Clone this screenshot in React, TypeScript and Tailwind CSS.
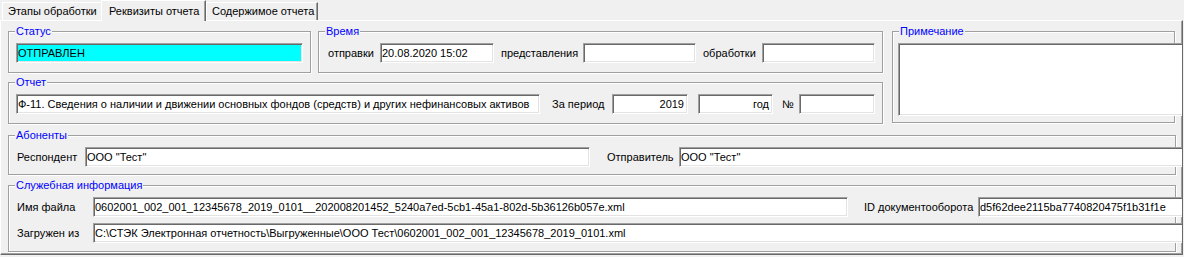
import React from 'react';

const sunken =
  'border border-t-[#a0a0a0] border-l-[#a0a0a0] border-r-white border-b-white shadow-[inset_1px_1px_0_#696969,inset_-1px_-1px_0_#e3e3e3]';

function Field({ value = '', className = '', right = false }: { value?: string; className?: string; right?: boolean }) {
  return (
    <div
      className={`${sunken} flex h-[20px] shrink-0 items-center overflow-hidden whitespace-nowrap pl-[1px] pr-[3px] ${
        right ? 'justify-end' : ''
      } ${className}`}
    >
      {value}
    </div>
  );
}

function Label({ text, className = '' }: { text: string; className?: string }) {
  return <div className={`shrink-0 whitespace-nowrap ${className}`}>{text}</div>;
}

function Group({ title, className = '', children }: { title: string; className?: string; children?: React.ReactNode }) {
  return (
    <div
      className={`relative shrink-0 border border-[#a0a0a0] shadow-[inset_1px_1px_0_#fff,1px_1px_0_#fff] ${className}`}
    >
      <span className="absolute left-[6px] top-[-8px] bg-[#f0f0f0] px-[1px] leading-[14px] text-[#0000ff]">{title}</span>
      {children}
    </div>
  );
}

function Tab({ text, active = false, className = '' }: { text: string; active?: boolean; className?: string }) {
  return (
    <div
      className={`flex shrink-0 items-center border-l border-t border-white bg-[#f0f0f0] ${
        active
          ? 'relative z-10 mb-[-1px] h-[21px] border-r border-r-[#696969] pl-[7px] shadow-[inset_-1px_0_0_#a0a0a0]'
          : 'h-[18px] pl-[5px]'
      } ${className}`}
    >
      {text}
    </div>
  );
}

export default function App() {
  return (
    <div className="h-[257px] w-[1184px] overflow-hidden bg-[#f0f0f0] font-['Liberation_Sans',Arial,sans-serif] text-[11px] text-black">
      <div className="relative z-10 flex h-[20px] items-end pl-[2px]">
        <Tab text="Этапы обработки" className="w-[99px]" />
        <Tab text="Реквизиты отчета" active className="w-[105px]" />
        <Tab
          text="Содержимое отчета"
          className="w-[112px] border-r border-r-[#696969] shadow-[inset_-1px_0_0_#a0a0a0]"
        />
      </div>

      <div className="h-[235px] w-[1183px] overflow-hidden border border-l-white border-t-white border-r-[#696969] border-b-[#696969] pl-[7px] pt-[10px] shadow-[inset_-1px_-1px_0_#a0a0a0]">
        <div className="flex gap-[9px]">
          <div className="flex w-[875px] flex-col gap-[9px]">
            <div className="flex gap-[7px]">
              <Group title="Статус" className="h-[42px] w-[303px] pl-[7px] pt-[11px]">
                <Field value="ОТПРАВЛЕН" className="w-[287px] !bg-[#00ffff]" />
              </Group>
              <Group title="Время" className="flex h-[42px] w-[565px] items-start pl-[9px] pt-[11px]">
                <div className="flex items-center">
                  <Label text="отправки" className="w-[52px]" />
                  <Field value="20.08.2020 15:02" className="w-[114px] bg-white" />
                  <Label text="представления" className="w-[89px] pl-[7px]" />
                  <Field className="w-[113px] bg-white" />
                  <Label text="обработки" className="w-[66px] pl-[7px]" />
                  <Field className="w-[113px] bg-white" />
                </div>
              </Group>
            </div>
            <Group title="Отчет" className="h-[42px] w-[875px] pl-[7px] pt-[11px]">
              <div className="flex items-center">
                <Field
                  value="Ф-11. Сведения о наличии и движении основных фондов (средств) и других нефинансовых активов"
                  className="w-[524px] bg-white"
                />
                <Label text="За период" className="w-[72px] pl-[12px]" />
                <Field value="2019" right className="w-[76px] bg-white" />
                <Field value="год" right className="ml-[10px] w-[75px] bg-white" />
                <Label text="№" className="w-[26px] pl-[9px]" />
                <Field className="w-[76px] bg-white" />
              </div>
            </Group>
          </div>
          <Group title="Примечание" className="h-[92px] w-[283px] pl-[5px] pt-[11px]">
            <div className={`${sunken} h-[73px] w-[290px] bg-white`} />
          </Group>
        </div>

        <Group title="Абоненты" className="mt-[11px] h-[40px] w-[1168px] pl-[8px] pt-[11px]">
          <div className="flex items-center">
            <Label text="Респондент" className="w-[68px]" />
            <Field value={'ООО "Тест"'} className="w-[505px] bg-white" />
            <Label text="Отправитель" className="w-[89px] pl-[17px]" />
            <Field value={'ООО "Тест"'} className="w-[520px] bg-white" />
          </div>
        </Group>

        <Group title="Служебная информация" className="mt-[10px] h-[67px] w-[1168px] pl-[8px] pt-[11px]">
          <div className="flex items-center">
            <Label text="Имя файла" className="w-[76px]" />
            <Field
              value="0602001_002_001_12345678_2019_0101__202008201452_5240a7ed-5cb1-45a1-802d-5b36126b057e.xml"
              className="w-[755px] bg-white"
            />
            <Label text="ID документооборота" className="w-[130px] pl-[16px]" />
            <Field value="d5f62dee2115ba7740820475f1b31f1e" className="w-[220px] bg-white" />
          </div>
          <div className="mt-[6px] flex items-center">
            <Label text="Загружен из" className="w-[76px]" />
            <Field
              value="C:\СТЭК Электронная отчетность\Выгруженные\ООО Тест\0602001_002_001_12345678_2019_0101.xml"
              className="w-[1100px] bg-white"
            />
          </div>
        </Group>
      </div>
    </div>
  );
}
